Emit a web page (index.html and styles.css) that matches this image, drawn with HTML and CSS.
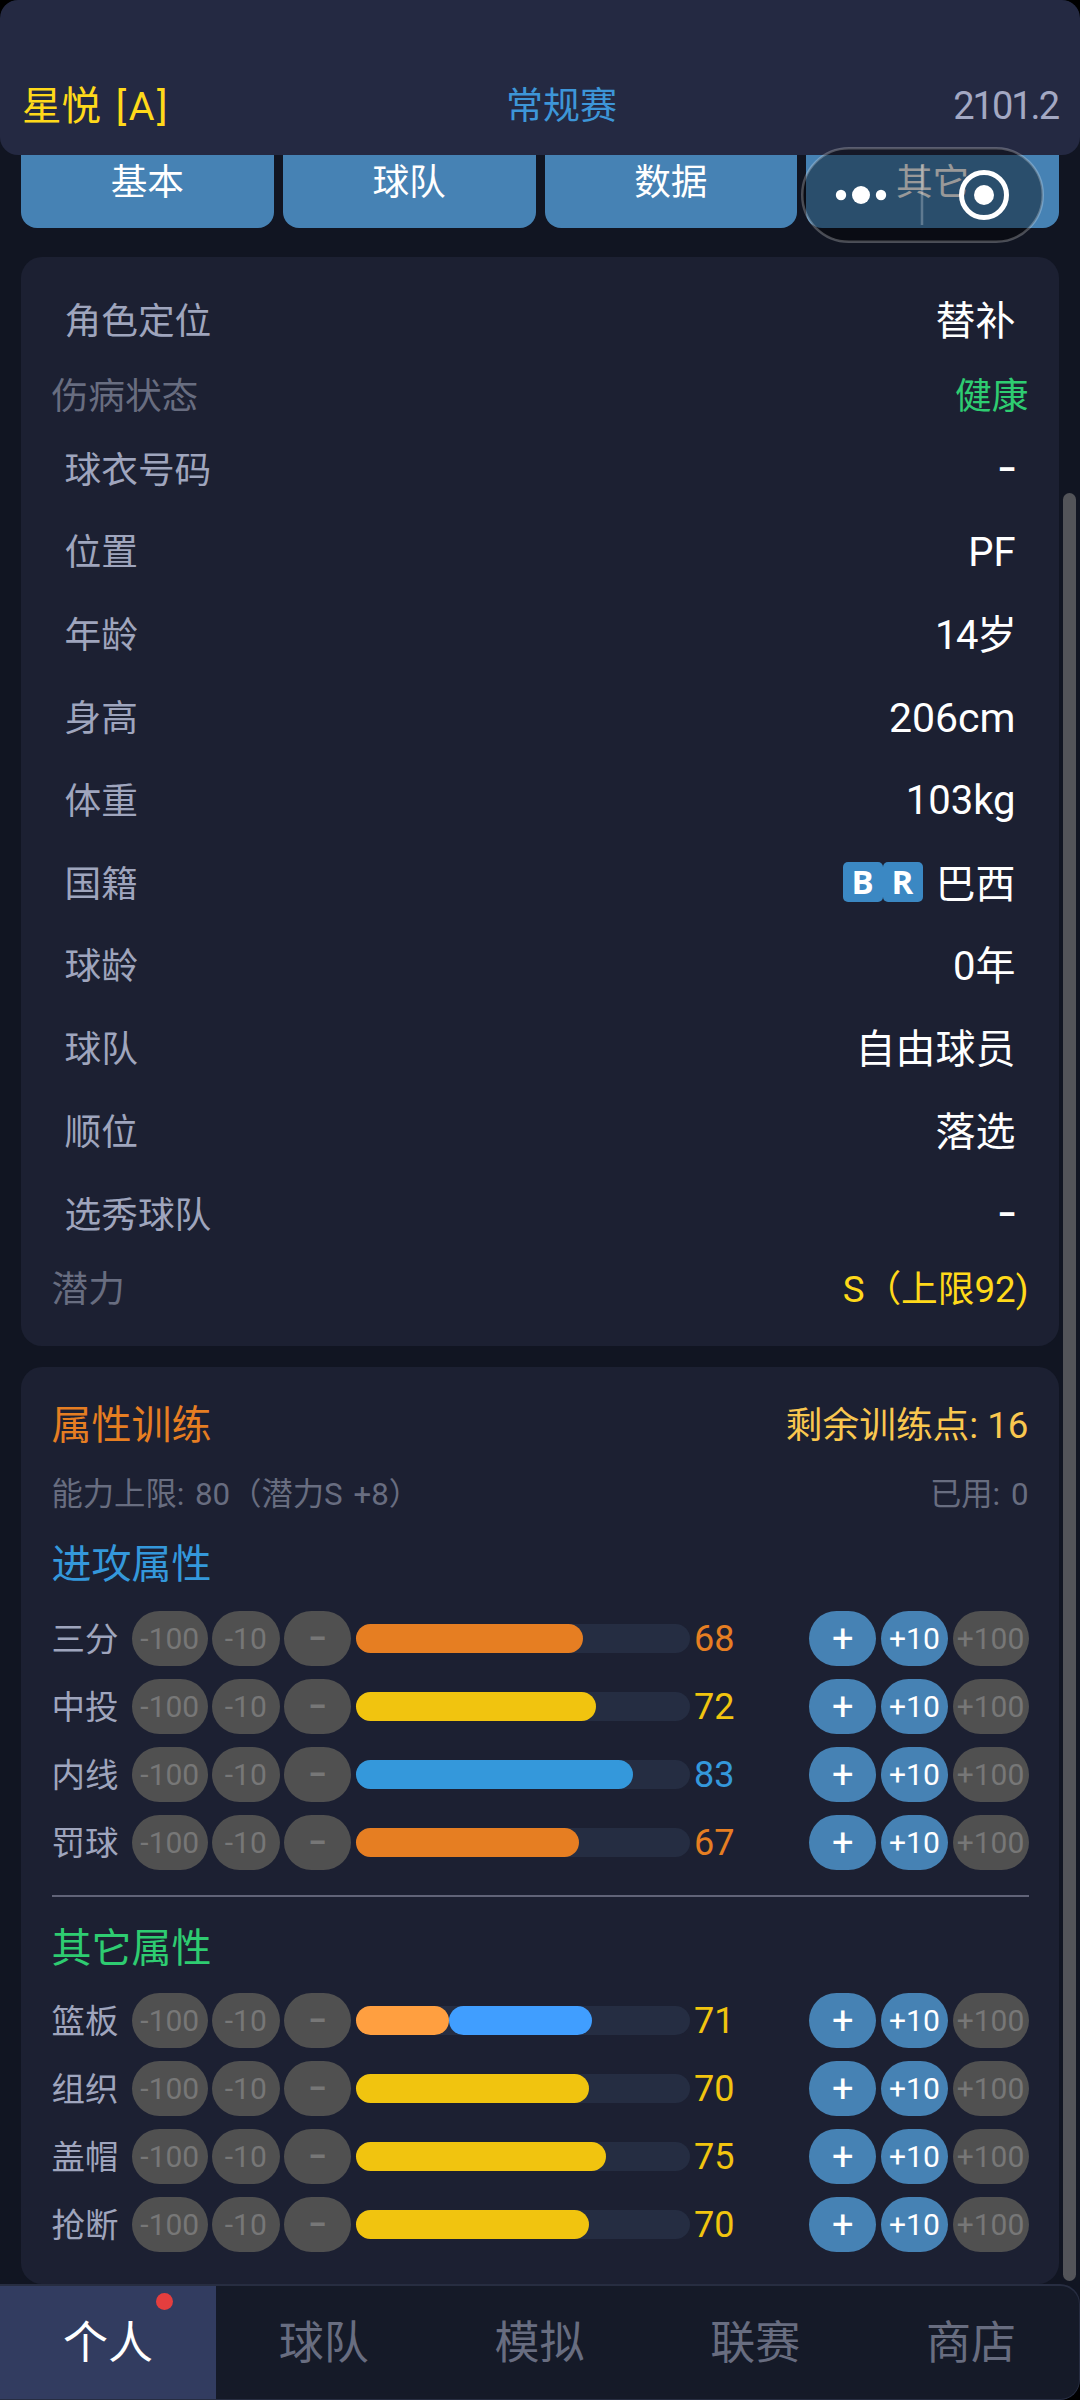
FILE: index.html
```html
<!DOCTYPE html>
<html lang="zh-CN">
<head>
<meta charset="utf-8">
<title>星悦</title>
<link rel="stylesheet" href="styles.css">
</head>
<body>
<div class="app">
  <header class="header">
    <span class="team">星悦 <span class="level">[A]</span></span>
    <span class="stage">常规赛</span>
    <span class="date">2101.2</span>
  </header>

  <main class="content">
    <nav class="tabs">
      <button class="tab">基本</button>
      <button class="tab">球队</button>
      <button class="tab">数据</button>
      <button class="tab">其它</button>
    </nav>

    <section class="card info">
      <div class="row"><span>角色定位</span><b>替补</b></div>
      <div class="row compact"><span>伤病状态</span><b class="green">健康</b></div>
      <div class="row"><span>球衣号码</span><b class="dash">-</b></div>
      <div class="row"><span>位置</span><b class="latin">PF</b></div>
      <div class="row"><span>年龄</span><b class="age">14岁</b></div>
      <div class="row"><span>身高</span><b class="latin height">206cm</b></div>
      <div class="row"><span>体重</span><b class="latin">103kg</b></div>
      <div class="row"><span>国籍</span><b class="nation"><i>B</i><i>R</i><em>巴西</em></b></div>
      <div class="row"><span>球龄</span><b>0年</b></div>
      <div class="row"><span>球队</span><b>自由球员</b></div>
      <div class="row"><span>顺位</span><b>落选</b></div>
      <div class="row"><span>选秀球队</span><b class="dash">-</b></div>
      <div class="row compact"><span>潜力</span><b class="gold">S（上限92)</b></div>
    </section>

    <section class="card training">
      <div class="line title"><h2>属性训练</h2><span class="points">剩余训练点: 16</span></div>
      <div class="line hint"><span>能力上限: 80（潜力S +8）</span><span>已用: 0</span></div>
      <h3 class="attack">进攻属性</h3>
      <div class="stats">
        <div class="stat orange"><span class="name">三分</span><button class="off wide">-100</button><button class="off">-10</button><button class="off sign minus">-</button><div class="bar"><div class="fill" style="width:68%"></div></div><span class="value">68</span><button class="sign">+</button><button>+10</button><button class="off wide">+100</button></div>
        <div class="stat yellow"><span class="name">中投</span><button class="off wide">-100</button><button class="off">-10</button><button class="off sign minus">-</button><div class="bar"><div class="fill" style="width:72%"></div></div><span class="value">72</span><button class="sign">+</button><button>+10</button><button class="off wide">+100</button></div>
        <div class="stat blue"><span class="name">内线</span><button class="off wide">-100</button><button class="off">-10</button><button class="off sign minus">-</button><div class="bar"><div class="fill" style="width:83%"></div></div><span class="value">83</span><button class="sign">+</button><button>+10</button><button class="off wide">+100</button></div>
        <div class="stat orange"><span class="name">罚球</span><button class="off wide">-100</button><button class="off">-10</button><button class="off sign minus">-</button><div class="bar"><div class="fill" style="width:67%"></div></div><span class="value">67</span><button class="sign">+</button><button>+10</button><button class="off wide">+100</button></div>
      </div>
      <hr>
      <h3 class="other">其它属性</h3>
      <div class="stats">
        <div class="stat yellow"><span class="name">篮板</span><button class="off wide">-100</button><button class="off">-10</button><button class="off sign minus">-</button><div class="bar"><div class="fill offensive" style="width:28%"></div><div class="fill defensive" style="width:42.7%"></div></div><span class="value">71</span><button class="sign">+</button><button>+10</button><button class="off wide">+100</button></div>
        <div class="stat yellow"><span class="name">组织</span><button class="off wide">-100</button><button class="off">-10</button><button class="off sign minus">-</button><div class="bar"><div class="fill" style="width:70%"></div></div><span class="value">70</span><button class="sign">+</button><button>+10</button><button class="off wide">+100</button></div>
        <div class="stat yellow"><span class="name">盖帽</span><button class="off wide">-100</button><button class="off">-10</button><button class="off sign minus">-</button><div class="bar"><div class="fill" style="width:75%"></div></div><span class="value">75</span><button class="sign">+</button><button>+10</button><button class="off wide">+100</button></div>
        <div class="stat yellow"><span class="name">抢断</span><button class="off wide">-100</button><button class="off">-10</button><button class="off sign minus">-</button><div class="bar"><div class="fill" style="width:70%"></div></div><span class="value">70</span><button class="sign">+</button><button>+10</button><button class="off wide">+100</button></div>
      </div>
    </section>
  </main>

  <nav class="bottom-nav">
    <a class="active">个人<span class="dot"></span></a>
    <a>球队</a>
    <a>模拟</a>
    <a>联赛</a>
    <a>商店</a>
  </nav>

  <div class="scrollbar"></div>
  <svg class="capsule" viewBox="0 0 243 96">
    <rect x="1.25" y="1.25" width="240.5" height="93.5" rx="46.7" fill="#000" fill-opacity=".4" stroke="#fff" stroke-opacity=".25" stroke-width="2.5"/>
    <path d="M121 18v60" stroke="#fff" stroke-opacity=".25" stroke-width="2.5"/>
    <g fill="#fff"><circle cx="40" cy="48" r="5.2"/><circle cx="60" cy="48" r="9"/><circle cx="80" cy="48" r="5.2"/><circle cx="183" cy="48" r="10"/></g>
    <circle cx="183" cy="48" r="22.5" fill="none" stroke="#fff" stroke-width="5"/>
  </svg>
</div>
</body>
</html>
```
FILE: styles.css
```css
* { box-sizing: border-box; }
body { margin: 0; background: #000; }
h2, h3, b, i, em { font-weight: 400; font-style: normal; margin: 0; }
button { border: 0; padding: 0; font: inherit; color: #fff; background: #4682b4; }

.app {
  position: relative;
  display: flex;
  flex-direction: column;
  width: 1080px;
  height: 2400px;
  overflow: hidden;
  border-radius: 18px 18px 20px 0;
  background: #111522;
  color: #fff;
  font-family: Roboto, "Noto Sans CJK SC", sans-serif;
  font-weight: 400;
  white-space: nowrap;
}

.header {
  position: relative;
  z-index: 1;
  flex: none;
  display: flex;
  justify-content: space-between;
  align-items: center;
  height: 155px;
  padding: 54px 22px 0;
  border-radius: 18px;
  background: #242942;
  font-size: 37px;
}
.team { padding-bottom: 5px; color: #ffd91a; font-size: 39.5px; }
.level { margin-left: 5px; letter-spacing: 2.5px; }
.stage { padding-bottom: 3px; color: #3d96d8; }
.date { padding-top: 2px; color: #a3a8c3; letter-spacing: -2px; font-size: 38px; }

.content {
  flex: none;
  height: 2150px;
  margin-top: -21px;
  padding: 0 21px;
}
.tabs { display: grid; grid-template-columns: repeat(4, 1fr); gap: 9px; }
.tab { height: 94px; padding-bottom: 5px; border-radius: 16px; font-size: 36.7px; }

.card { border-radius: 21px; background: #1c2032; }
.info { height: 1089px; margin-top: 29px; padding: 21.6px 30.5px 0; }
.row {
  display: flex;
  justify-content: space-between;
  align-items: center;
  height: 82.8px;
  padding: 0 13px;
  font-size: 36.7px;
  color: #9fa5bd;
}
.row span, .row b { padding-bottom: 3px; }
.row b { font-size: 40px; color: #fff; }
.row.compact { height: 65.3px; padding: 0; color: #686d80; }
.row.compact b { font-size: 36.7px; }
.row b.latin { padding: 3px 0 0; }
.row b.height { font-size: 41px; }
.row b.age { letter-spacing: -1.5px; }
.row b.dash { padding-bottom: 4px; margin-right: -2px; font-family: Inter, sans-serif; font-size: 45px; }
.row b.green { color: #2ecc71; }
.row b.gold { color: #ffd91a; }
.row b.nation { display: flex; align-items: center; padding: 0; }
.nation i {
  width: 40px;
  height: 40px;
  border-radius: 5px;
  background: #3b88c3;
  font: 700 33px/40px "Open Sans", sans-serif;
  text-align: center;
}
.nation em { margin-left: 13px; padding-bottom: 3px; }

.training { height: 917px; margin-top: 21px; padding: 26px 30.5px 0; }
.line { display: flex; justify-content: space-between; align-items: center; padding-bottom: 6px; }
.title { height: 64px; }
.title h2 { font-size: 40px; color: #e67e22; }
.points { font-size: 36.7px; color: #f9c74f; }
.hint { height: 74px; font-size: 31.3px; word-spacing: 3px; color: #686d80; }
h3 { height: 68px; line-height: 68px; font-size: 40px; }
.attack { color: #3498db; }
.other { color: #2ecc71; }
.stats { display: flex; flex-direction: column; gap: 13px; padding-top: 12px; }
.stat {
  display: flex;
  align-items: center;
  gap: 4.3px;
  height: 55px;
  font-size: 36px;
}
.stat .name { width: 76px; padding-bottom: 5px; font-size: 33.5px; color: #9fa5bd; }
.stat button { flex: none; width: 67.5px; height: 55px; border-radius: 27.5px; font-size: 30px; }
.stat .wide { width: 76px; }
.stat .sign { font-size: 38px; }
.stat .minus { padding-bottom: 5px; font-family: Inter, sans-serif; font-size: 44px; line-height: 50px; }
.stat .off { background: #505050; color: #777; }
.bar { display: flex; flex: none; width: 334px; height: 29px; border-radius: 14.5px; background: #252d42; }
.fill { height: 100%; border-radius: 14.5px; background: currentColor; }
.offensive { background: #ff9f40; }
.defensive { background: #409eff; }
.value { flex: 1; }
.orange { color: #e67e22; }
.yellow { color: #f1c40f; }
.blue { color: #3498db; }
hr { height: 2px; margin: 25px 0 18px; border: 0; background: #606378; }
.other + .stats { padding-top: 10px; }

.bottom-nav {
  position: relative;
  flex: 1;
  display: grid;
  grid-template-columns: repeat(5, 1fr);
  border: 1px solid #272d41;
  border-left: 0;
  border-top-width: 2px;
  border-radius: 0 20px 20px 0;
  background: #151a28;
  font-size: 45px;
  color: #686d80;
  overflow: hidden;
}
.bottom-nav a { position: relative; display: flex; align-items: center; justify-content: center; padding-bottom: 6px; }
.bottom-nav .active { background: #323c60; color: #fff; }
.dot {
  position: absolute;
  left: 156px;
  top: 7px;
  width: 17px;
  height: 17px;
  border-radius: 50%;
  background: #e53e3e;
}

.scrollbar {
  position: absolute;
  left: 1063px;
  top: 493px;
  width: 13px;
  height: 1788px;
  border-radius: 6.5px;
  background: #535459;
}
.capsule { position: absolute; z-index: 2; left: 801px; top: 147px; width: 243px; height: 96px; }
```
